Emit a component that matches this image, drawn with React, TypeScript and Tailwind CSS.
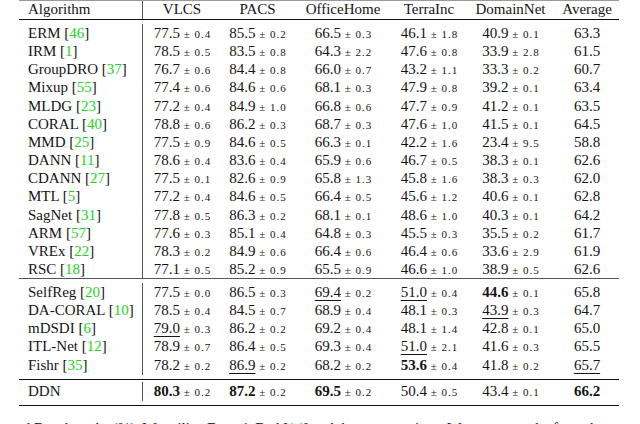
type Cell = [string, string, string?];

type Row = { name: string; cite?: string; cells: Cell[]; avg: [string, string?] };

const group1: Row[] = [
  { name: "ERM", cite: "46", cells: [["77.5", "0.4"], ["85.5", "0.2"], ["66.5", "0.3"], ["46.1", "1.8"], ["40.9", "0.1"]], avg: ["63.3"] },
  { name: "IRM", cite: "1", cells: [["78.5", "0.5"], ["83.5", "0.8"], ["64.3", "2.2"], ["47.6", "0.8"], ["33.9", "2.8"]], avg: ["61.5"] },
  { name: "GroupDRO", cite: "37", cells: [["76.7", "0.6"], ["84.4", "0.8"], ["66.0", "0.7"], ["43.2", "1.1"], ["33.3", "0.2"]], avg: ["60.7"] },
  { name: "Mixup", cite: "55", cells: [["77.4", "0.6"], ["84.6", "0.6"], ["68.1", "0.3"], ["47.9", "0.8"], ["39.2", "0.1"]], avg: ["63.4"] },
  { name: "MLDG", cite: "23", cells: [["77.2", "0.4"], ["84.9", "1.0"], ["66.8", "0.6"], ["47.7", "0.9"], ["41.2", "0.1"]], avg: ["63.5"] },
  { name: "CORAL", cite: "40", cells: [["78.8", "0.6"], ["86.2", "0.3"], ["68.7", "0.3"], ["47.6", "1.0"], ["41.5", "0.1"]], avg: ["64.5"] },
  { name: "MMD", cite: "25", cells: [["77.5", "0.9"], ["84.6", "0.5"], ["66.3", "0.1"], ["42.2", "1.6"], ["23.4", "9.5"]], avg: ["58.8"] },
  { name: "DANN", cite: "11", cells: [["78.6", "0.4"], ["83.6", "0.4"], ["65.9", "0.6"], ["46.7", "0.5"], ["38.3", "0.1"]], avg: ["62.6"] },
  { name: "CDANN", cite: "27", cells: [["77.5", "0.1"], ["82.6", "0.9"], ["65.8", "1.3"], ["45.8", "1.6"], ["38.3", "0.3"]], avg: ["62.0"] },
  { name: "MTL", cite: "5", cells: [["77.2", "0.4"], ["84.6", "0.5"], ["66.4", "0.5"], ["45.6", "1.2"], ["40.6", "0.1"]], avg: ["62.8"] },
  { name: "SagNet", cite: "31", cells: [["77.8", "0.5"], ["86.3", "0.2"], ["68.1", "0.1"], ["48.6", "1.0"], ["40.3", "0.1"]], avg: ["64.2"] },
  { name: "ARM", cite: "57", cells: [["77.6", "0.3"], ["85.1", "0.4"], ["64.8", "0.3"], ["45.5", "0.3"], ["35.5", "0.2"]], avg: ["61.7"] },
  { name: "VREx", cite: "22", cells: [["78.3", "0.2"], ["84.9", "0.6"], ["66.4", "0.6"], ["46.4", "0.6"], ["33.6", "2.9"]], avg: ["61.9"] },
  { name: "RSC", cite: "18", cells: [["77.1", "0.5"], ["85.2", "0.9"], ["65.5", "0.9"], ["46.6", "1.0"], ["38.9", "0.5"]], avg: ["62.6"] },
];

const group2: Row[] = [
  { name: "SelfReg", cite: "20", cells: [["77.5", "0.0"], ["86.5", "0.3"], ["69.4", "0.2", "u"], ["51.0", "0.4", "u"], ["44.6", "0.1", "b"]], avg: ["65.8"] },
  { name: "DA-CORAL", cite: "10", cells: [["78.5", "0.4"], ["84.5", "0.7"], ["68.9", "0.4"], ["48.1", "0.3"], ["43.9", "0.3", "u"]], avg: ["64.7"] },
  { name: "mDSDI", cite: "6", cells: [["79.0", "0.3", "u"], ["86.2", "0.2"], ["69.2", "0.4"], ["48.1", "1.4"], ["42.8", "0.1"]], avg: ["65.0"] },
  { name: "ITL-Net", cite: "12", cells: [["78.9", "0.7"], ["86.4", "0.5"], ["69.3", "0.4"], ["51.0", "2.1", "u"], ["41.6", "0.3"]], avg: ["65.5"] },
  { name: "Fishr", cite: "35", cells: [["78.2", "0.2"], ["86.9", "0.2", "u"], ["68.2", "0.2"], ["53.6", "0.4", "b"], ["41.8", "0.2"]], avg: ["65.7", "u"] },
];

const ours: Row[] = [
  { name: "DDN", cells: [["80.3", "0.2", "b"], ["87.2", "0.2", "b"], ["69.5", "0.2", "b"], ["50.4", "0.5"], ["43.4", "0.1"]], avg: ["66.2", "b"] },
];

const cols = "grid grid-cols-[124px_78px_73px_98px_74px_89px_64px]";

function Main({ v, mark }: { v: string; mark?: string }) {
  if (mark === "b") return <span className="font-bold">{v}</span>;
  if (mark === "u") return <span className="underline decoration-1 underline-offset-[3px]">{v}</span>;
  return <span>{v}</span>;
}

function TableRow({ row }: { row: Row }) {
  return (
    <div className={`${cols} h-[18.2px] leading-[18.2px]`}>
      <div className="pl-[9px] border-r border-[#555] whitespace-nowrap">
        {row.name}
        {row.cite && (
          <>
            {" "}[<span className="text-[#22d322]">{row.cite}</span>]
          </>
        )}
      </div>
      {row.cells.map(([v, sd, mark], i) => (
        <div key={i} className="text-center whitespace-nowrap">
          <Main v={v} mark={mark} />{" "}
          <span className="text-[11px] tracking-[1px] -mr-[1px]">± {sd}</span>
        </div>
      ))}
      <div className="text-center">
        <Main v={row.avg[0]} mark={row.avg[1]} />
      </div>
    </div>
  );
}

export default function App() {
  return (
    <div className="w-[640px] h-[424px] overflow-hidden bg-white text-[15px] text-[#141414] font-['Liberation_Serif',serif]">
      <div className="ml-[19px] w-[600px]">
        <div className="h-px bg-[#9a9a9a]" />
        <div className={`${cols} h-[17.5px] leading-[17.5px]`}>
          <div className="pl-[9px] border-r border-[#555]">Algorithm</div>
          <div className="text-center">VLCS</div>
          <div className="text-center">PACS</div>
          <div className="text-center">OfficeHome</div>
          <div className="text-center">TerraInc</div>
          <div className="text-center">DomainNet</div>
          <div className="text-center">Average</div>
        </div>
        <div className="h-[1.5px] bg-[#111]" />
        <div className="h-[3.8px]" />
        {group1.map((r) => (
          <TableRow key={r.name} row={r} />
        ))}
        <div className="h-[0.8px] bg-[#555]" />
        <div className="h-[3.6px]" />
        {group2.map((r) => (
          <TableRow key={r.name} row={r} />
        ))}
        <div className="h-[4.8px]" />
        <div className="h-[1.5px] bg-[#111]" />
        <div className="h-[1.5px]" />
        {ours.map((r) => (
          <TableRow key={r.name} row={r} />
        ))}
        <div className="h-[4.8px]" />
        <div className="h-[1.5px] bg-[#111]" />
      </div>
      <div className="mt-[13px] -ml-[6px] whitespace-nowrap leading-[18px]">
        ta and Benchmarks (%). We utilize DomainBed [<span className="text-[#22d322]">14</span>] and the same settings. We report results from three runs with standard deviation.
      </div>
    </div>
  );
}
